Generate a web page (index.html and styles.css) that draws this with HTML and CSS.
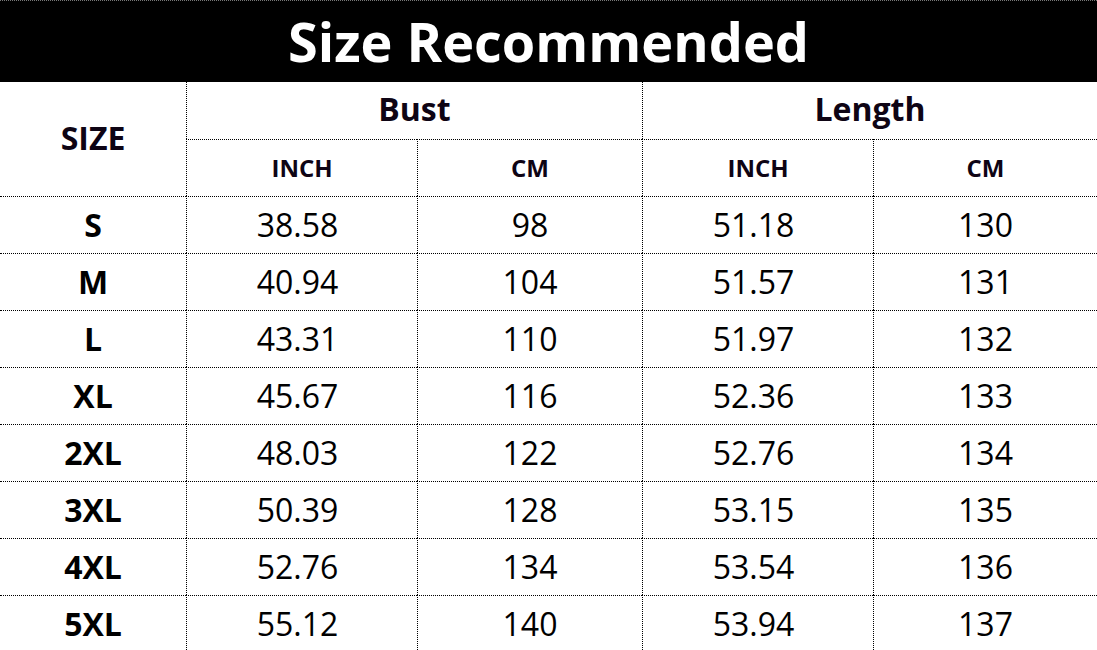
FILE: index.html
```html
<!DOCTYPE html>
<html>
<head>
<meta charset="utf-8">
<link rel="stylesheet" href="styles.css">
</head>
<body>
<div class="chart">
  <div class="title">Size Recommended</div>
  <div class="grid">
    <div class="cell head size-head">SIZE</div>
    <div class="cell head group first-row">Bust</div>
    <div class="cell head group first-row">Length</div>
    <div class="cell sub">INCH</div>
    <div class="cell sub">CM</div>
    <div class="cell sub">INCH</div>
    <div class="cell sub">CM</div>

    <div class="cell label">S</div><div class="cell val inch">38.58</div><div class="cell val">98</div><div class="cell val inch">51.18</div><div class="cell val">130</div>
    <div class="cell label">M</div><div class="cell val inch">40.94</div><div class="cell val">104</div><div class="cell val inch">51.57</div><div class="cell val">131</div>
    <div class="cell label">L</div><div class="cell val inch">43.31</div><div class="cell val">110</div><div class="cell val inch">51.97</div><div class="cell val">132</div>
    <div class="cell label">XL</div><div class="cell val inch">45.67</div><div class="cell val">116</div><div class="cell val inch">52.36</div><div class="cell val">133</div>
    <div class="cell label">2XL</div><div class="cell val inch">48.03</div><div class="cell val">122</div><div class="cell val inch">52.76</div><div class="cell val">134</div>
    <div class="cell label">3XL</div><div class="cell val inch">50.39</div><div class="cell val">128</div><div class="cell val inch">53.15</div><div class="cell val">135</div>
    <div class="cell label">4XL</div><div class="cell val inch">52.76</div><div class="cell val">134</div><div class="cell val inch">53.54</div><div class="cell val">136</div>
    <div class="cell label">5XL</div><div class="cell val inch">55.12</div><div class="cell val">140</div><div class="cell val inch">53.94</div><div class="cell val">137</div>
  </div>
</div>
</body>
</html>
```
FILE: styles.css
```css
html, body {
  margin: 0;
  padding: 0;
  background: #fff;
}
.chart {
  width: 1097px;
  height: 650px;
  overflow: hidden;
  font-family: "Open Sans", "Noto Sans", sans-serif;
  color: #000;
}
.title {
  height: 82px;
  box-sizing: border-box;
  background: #000;
  border-top: 1px dotted #777;
  color: #fff;
  font-weight: 700;
  font-size: 54px;
  display: flex;
  align-items: center;
  justify-content: center;
  padding-bottom: 2px;
}
.grid {
  display: grid;
  grid-template-columns: 186px 231px 225px 231px 224px;
  grid-auto-rows: 57px;
}
.cell {
  display: flex;
  align-items: center;
  justify-content: center;
  box-sizing: border-box;
  border-top: 1px dotted #000;
  border-left: 1px dotted #000;
}
.head, .sub, .label {
  font-weight: 700;
  color: #0e0414;
}
.size-head {
  grid-row: span 2;
  border-top: none;
  border-left: none;
  font-size: 32px;
  padding-bottom: 4px;
}
.group {
  grid-column: span 2;
  border-top: none;
  font-size: 32px;
  padding-bottom: 4px;
}
.sub {
  font-size: 24px;
  padding-bottom: 2px;
}
.label {
  border-left: none;
  font-size: 32px;
  color: #000;
  padding-bottom: 2px;
}
.val {
  font-size: 32px;
  padding-bottom: 2px;
}
.val.inch {
  padding-right: 9px;
}
```
